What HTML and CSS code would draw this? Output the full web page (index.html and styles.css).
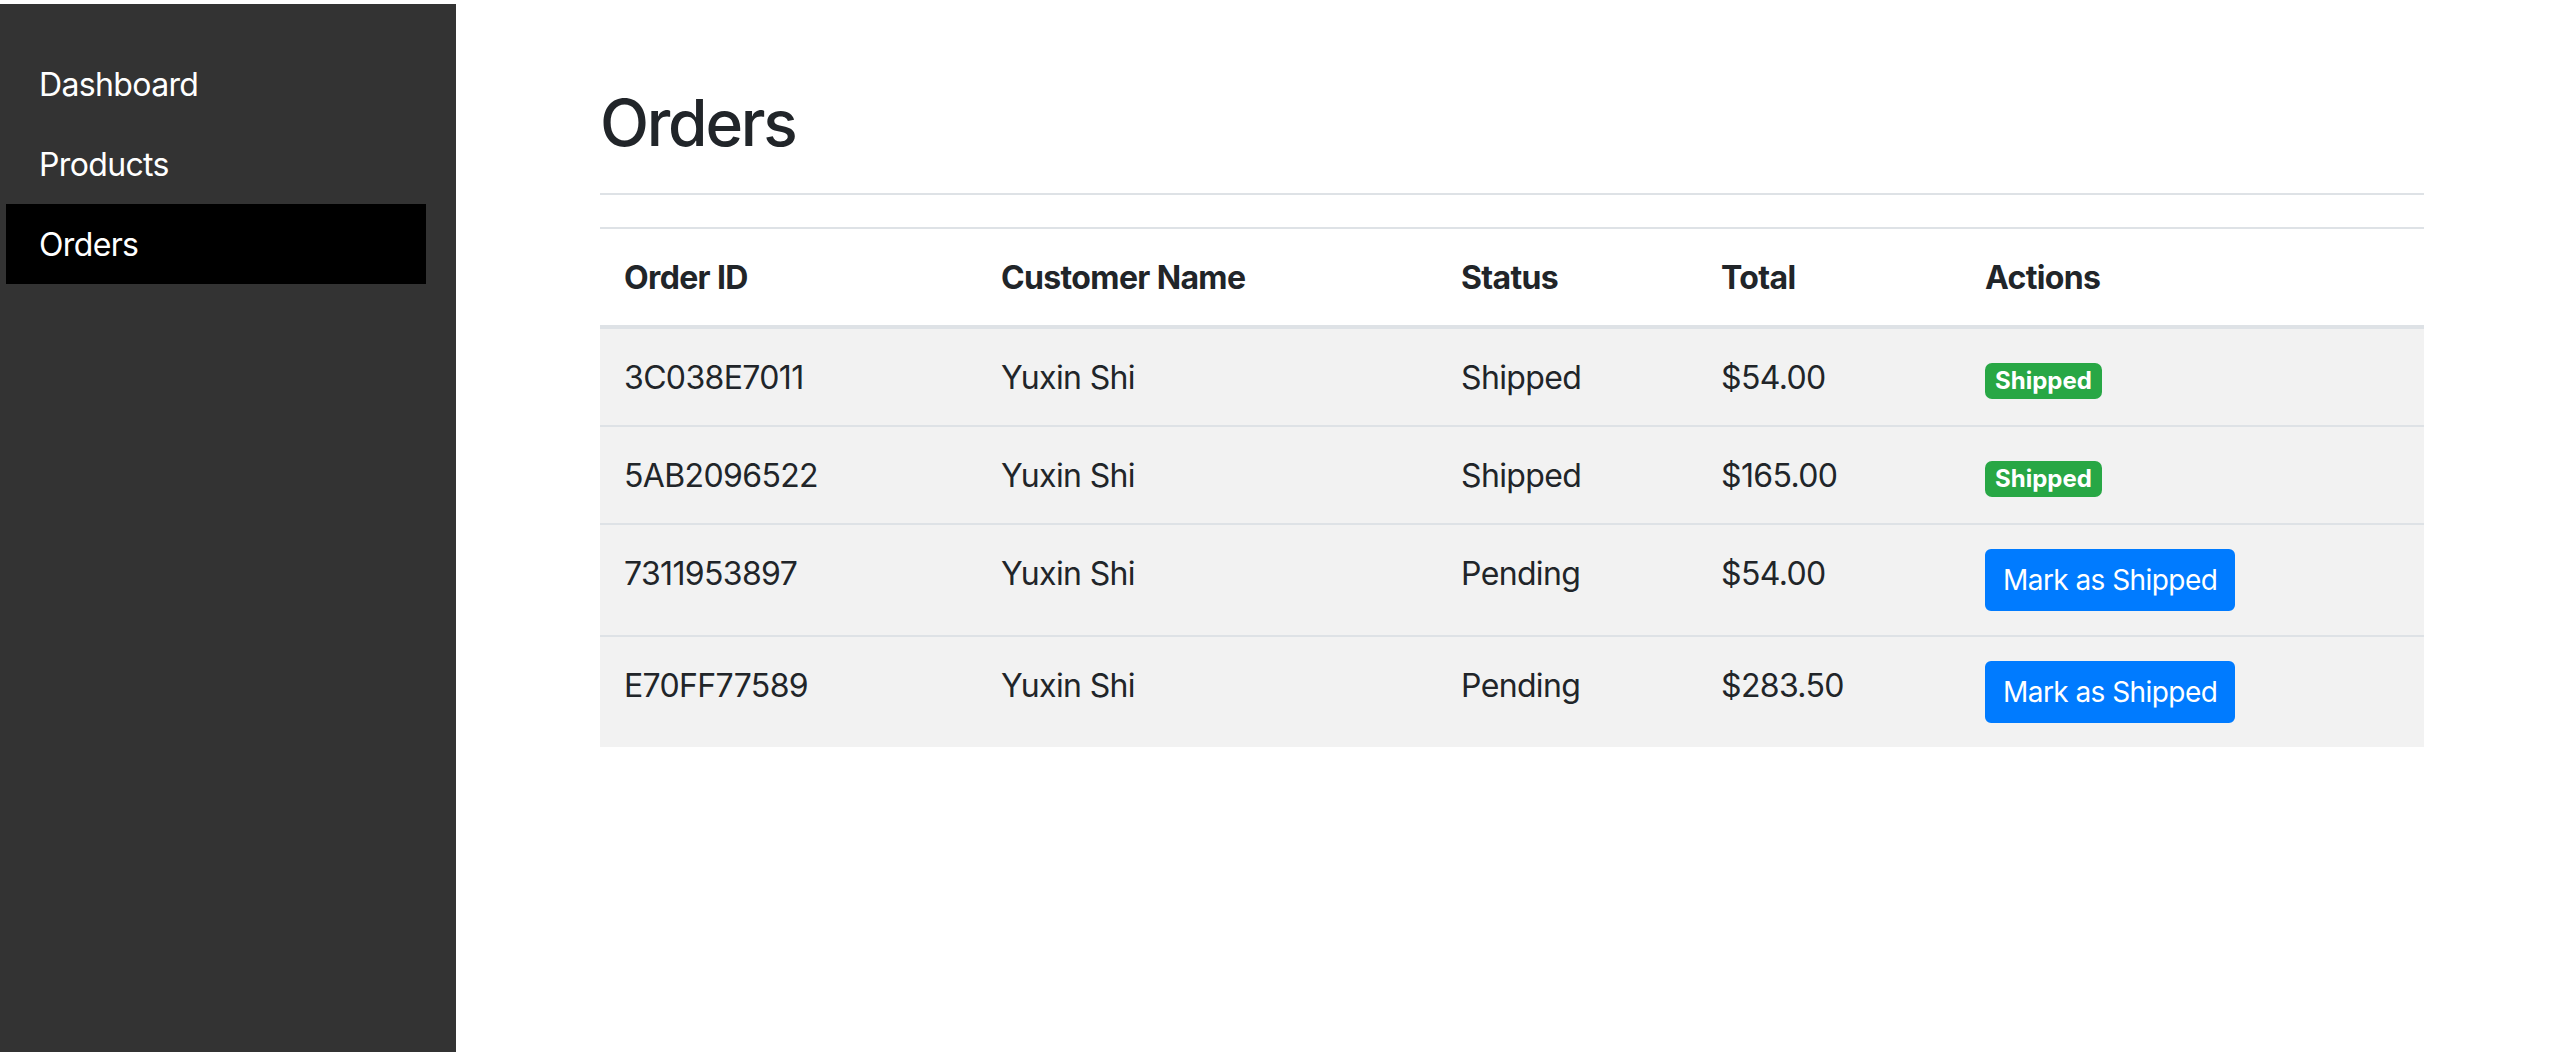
FILE: index.html
```html
<!DOCTYPE html>
<html lang="en">
<head>
<meta charset="utf-8">
<title>Orders</title>
<link rel="stylesheet" href="styles.css">
</head>
<body>
<div class="layout">
  <nav class="sidebar">
    <a class="nav-item" href="#">Dashboard</a>
    <a class="nav-item" href="#">Products</a>
    <a class="nav-item active" href="#">Orders</a>
  </nav>
  <main class="main">
    <h2 class="title">Orders</h2>
    <hr class="divider">
    <table class="orders">
      <thead>
        <tr>
          <th class="col-id">Order ID</th>
          <th class="col-name">Customer Name</th>
          <th class="col-status">Status</th>
          <th class="col-total">Total</th>
          <th class="col-actions">Actions</th>
        </tr>
      </thead>
      <tbody>
        <tr>
          <td>3C038E7011</td>
          <td>Yuxin Shi</td>
          <td>Shipped</td>
          <td>$54.00</td>
          <td><span class="badge">Shipped</span></td>
        </tr>
        <tr>
          <td>5AB2096522</td>
          <td>Yuxin Shi</td>
          <td>Shipped</td>
          <td>$165.00</td>
          <td><span class="badge">Shipped</span></td>
        </tr>
        <tr>
          <td>7311953897</td>
          <td>Yuxin Shi</td>
          <td>Pending</td>
          <td>$54.00</td>
          <td><button class="btn" type="button">Mark as Shipped</button></td>
        </tr>
        <tr>
          <td>E70FF77589</td>
          <td>Yuxin Shi</td>
          <td>Pending</td>
          <td>$283.50</td>
          <td><button class="btn" type="button">Mark as Shipped</button></td>
        </tr>
      </tbody>
    </table>
  </main>
</div>
</body>
</html>
```

FILE: styles.css
```css
* { box-sizing: border-box; }

html, body {
  margin: 0;
  padding: 0;
  background: #fff;
}

body {
  font-family: Inter, "Noto Sans", "Liberation Sans", sans-serif;
  font-size: 32px;
  line-height: 1.5;
  color: #212529;
  letter-spacing: -0.02em;
}

.layout {
  display: flex;
  min-height: 100vh;
  padding-top: 4px;
}

.sidebar {
  flex: 0 0 456px;
  width: 456px;
  background: #333333;
  padding: 41px 30px 0 6px;
  display: flex;
  flex-direction: column;
}

.nav-item {
  display: block;
  height: 80px;
  line-height: 80px;
  padding-left: 33px;
  color: #fff;
  text-decoration: none;
  font-size: 32px;
}

.nav-item.active {
  background: #000;
  margin-top: -1px;
  line-height: 82px;
}

.main {
  flex: 1 1 auto;
  padding: 81px 134px 0 144px;
}

.title {
  margin: 0;
  font-size: 64px;
  font-weight: 500;
  line-height: 1.2;
  letter-spacing: -0.035em;
}

.divider {
  margin: 31px 0 32px;
  border: 0;
  border-top: 2px solid #dee2e6;
  height: 0;
}

.orders {
  width: 100%;
  border-collapse: collapse;
  table-layout: fixed;
}

.orders th,
.orders td {
  padding: 25px 24px 23px;
  text-align: left;
  vertical-align: top;
  border-top: 2px solid #dee2e6;
  line-height: 48px;
}

.orders th {
  font-weight: 700;
  border-bottom: 4px solid #dee2e6;
}

.orders td.action-cell,
.orders td:last-child {
  padding-top: 24px;
  padding-bottom: 24px;
}

.orders tbody tr {
  background: #f2f2f2;
}

.col-id { width: 377px; }
.col-name { width: 460px; }
.col-status { width: 260px; }
.col-total { width: 264px; }
.col-actions { width: 463px; }

.badge {
  display: inline-block;
  padding: 6px 10px;
  font-size: 24px;
  font-weight: 700;
  line-height: 1;
  color: #fff;
  background: #28a745;
  border-radius: 7px;
  vertical-align: baseline;
  white-space: nowrap;
  letter-spacing: 0;
  position: relative;
  top: 1px;
}

.btn {
  display: inline-block;
  font-family: inherit;
  font-size: 28px;
  font-weight: 400;
  line-height: 42px;
  padding: 8px 16px;
  border: 2px solid #007bff;
  border-radius: 6px;
  background: #007bff;
  color: #fff;
  vertical-align: middle;
  letter-spacing: -0.02em;
  cursor: pointer;
}
```
